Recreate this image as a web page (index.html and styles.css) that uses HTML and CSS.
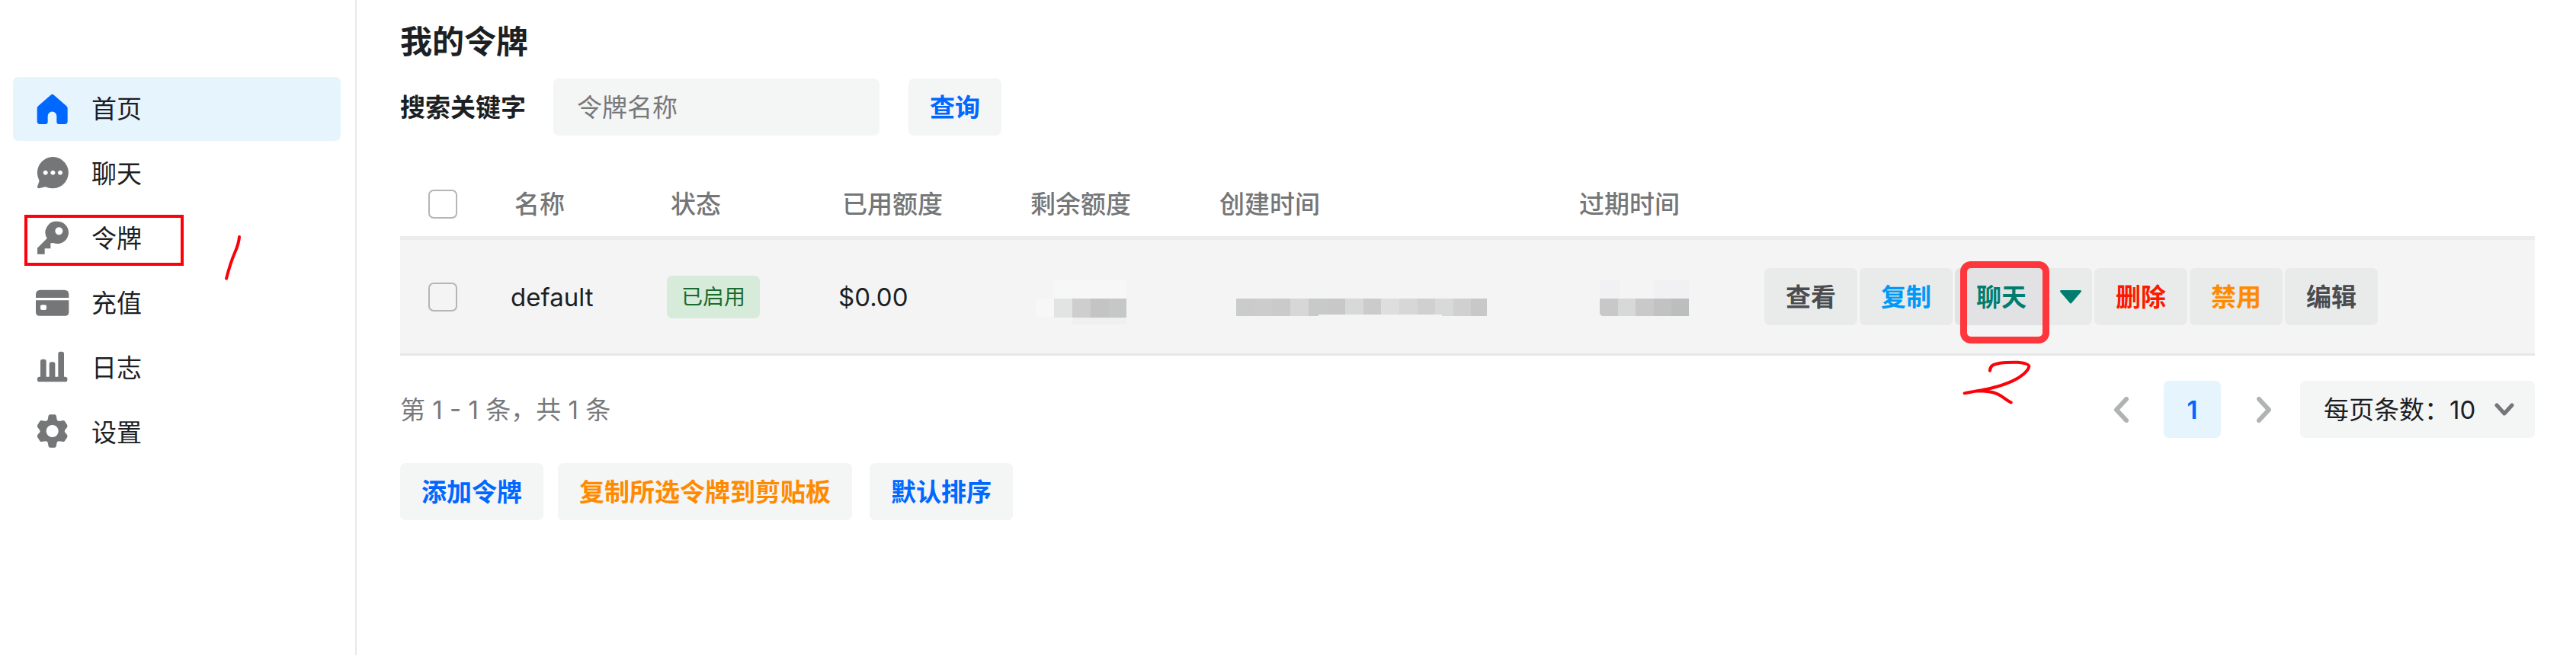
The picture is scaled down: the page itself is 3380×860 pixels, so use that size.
FILE: index.html
```html
<!DOCTYPE html>
<html lang="zh-CN">
<head>
<meta charset="utf-8">
<title>我的令牌</title>
<link rel="stylesheet" href="styles.css">
</head>
<body>
<div class="layout">
  <nav class="sidebar">
    <ul class="menu">
      <li class="menu-item"><a class="menu-link active" href="#">
        <svg class="icon" viewBox="0 0 144 144"><path d="M65 17q6-5 12 0l50 44q4 4 4 9v51q0 11-11 11H97q-9 0-9-9v-22a17 18 0 0 0-35 0v22q0 9-9 9H22q-11 0-11-11V70q0-5 4-9z"/></svg>首页</a></li>
      <li class="menu-item"><a class="menu-link" href="#">
        <svg class="icon" viewBox="0 0 144 144"><path fill-rule="evenodd" d="M73 6a62 62 0 1 1-25 119q-5-2-11 0l-18 5q-8 1-7-7l7-20q1-4-1-8A62 62 0 0 1 73 6zM44 59a9 9 0 1 0 .1 0zm29 0a9 9 0 1 0 .1 0zm29 0a9 9 0 1 0 .1 0z"/></svg>聊天</a></li>
      <li class="menu-item"><a class="menu-link" href="#">
        <svg class="icon" viewBox="0 0 144 144"><path fill-rule="evenodd" d="M91 5a44 44 0 1 1-16 85l-11 1v21H41v22H12v-24l38-38A44 44 0 0 1 91 5zm6 23a15 15 0 1 0 .1 0z"/></svg>令牌</a>
        <span class="menu-mark"></span>
        <svg class="stroke-one" viewBox="0 0 78 186"><path d="M63 12Q61 39 45 75T12 176"/></svg>
      </li>
      <li class="menu-item"><a class="menu-link" href="#">
        <svg class="icon" viewBox="0 0 144 144"><path fill-rule="evenodd" d="M24 20h94q18 0 18 18v13H6V38q0-18 18-18zM6 61h130v46q0 15-15 15H21q-15 0-15-15zm24 18q-6 0-6 6v8q0 6 6 6h12q6 0 6-6v-8q0-6-6-6z"/></svg>充值</a></li>
      <li class="menu-item"><a class="menu-link" href="#">
        <svg class="icon" viewBox="0 0 144 144"><rect x="12" y="107" width="118" height="20" rx="8"/><path d="M24 112V46q0-8 8-8h7q8 0 8 8v66zM59 112V57q0-8 8-8h7q8 0 8 8v55zM94 112V16q0-8 8-8h7q8 0 8 8v96z"/></svg>日志</a></li>
      <li class="menu-item"><a class="menu-link" href="#">
        <svg class="icon" viewBox="0 0 144 144"><path fill-rule="evenodd" d="M61 1h20q5 1 6 8 1 12 4 16 5 3 19 0 7-2 10 2l10 16q2 6-3 11-8 8-8 12t8 12q5 5 3 11l-10 16q-3 4-10 2-14-3-19 0-3 4-4 16-1 7-6 8H61q-5-1-6-8-1-12-4-16-5-3-19 0-7 2-10-2L12 89q-2-6 3-11 8-8 8-12t-8-12q-5-5-3-11l10-16q3-4 10-2 14 3 19 0 3-4 4-16 1-7 6-8zm10 41a24 24 0 1 0 .1 0z"/></svg>设置</a></li>
    </ul>
  </nav>

  <main class="main">
    <h1 class="title">我的令牌</h1>
    <form class="search">
      <label class="search-label" for="keyword">搜索关键字</label>
      <input class="search-input" id="keyword" type="text" placeholder="令牌名称">
      <button class="btn primary" type="button">查询</button>
    </form>

    <table class="tokens">
      <colgroup><col class="c-check"><col class="c-name"><col class="c-status"><col class="c-used"><col class="c-time"><col class="c-created"><col class="c-time"><col></colgroup>
      <thead>
        <tr>
          <th><input class="check" type="checkbox" aria-label="全选"></th>
          <th>名称</th><th>状态</th><th>已用额度</th><th>剩余额度</th><th>创建时间</th><th>过期时间</th><th></th>
        </tr>
      </thead>
      <tbody>
        <tr>
          <td><input class="check" type="checkbox" aria-label="选择 default"></td>
          <td>default</td>
          <td><span class="tag">已启用</span></td>
          <td>$0.00</td>
          <td><svg class="mask" width="134" height="60" viewBox="0 -3 134 60">
            <path fill="#f7f7f7" d="M36 4h95v25H36zM12 29h24v24H12z"/><path fill="#eff0f0" d="M60 53h71v10H60z"/>
            <path fill="#e1e4e3" d="M36 29h24v25H36z"/><path fill="#cecece" d="M60 29h24v25H60z"/><path fill="#c4c4c4" d="M84 29h24v25H84z"/><path fill="#c6c8c7" d="M108 29h23v25h-23z"/></svg></td>
          <td><svg class="mask" width="360" height="60" viewBox="0 -3 360 60">
            <path fill="#c9cccb" d="M27 29h23v23H27z"/><path fill="#cdcccd" d="M50 29h24v23H50z"/><path fill="#cacaca" d="M74 29h24v23H74z"/><path fill="#d7d7d7" d="M98 29h24v23H98z"/><path fill="#c8cac9" d="M122 29h24v21h-11v2h-13z"/><path fill="#c8c8c9" d="M146 29h24v21h-24z"/><path fill="#d6d9d8" d="M170 29h24v21h-24z"/><path fill="#cbcbcb" d="M194 29h23v21h-23z"/><path fill="#dedede" d="M217 29h24v21h-24z"/><path fill="#d7d7d7" d="M241 29h24v21h-24z"/><path fill="#d0d0d0" d="M265 29h23v21h-23z"/><path fill="#d7dad8" d="M288 29h24v23h-15v-2h-9z"/><path fill="#d0d0d0" d="M312 29h23v23h-23z"/><path fill="#c8c8c8" d="M335 29h21v23h-21z"/></svg></td>
          <td><svg class="mask" width="160" height="60" viewBox="0 -3 160 60">
            <path fill="#f1f1f3" d="M32 4h26v25H32zM103 4h46v25h-46z"/><path fill="#c8c8c8" d="M32 29h24v23H34v-2h-2z"/><path fill="#d6d9d8" d="M56 29h23v23H56z"/><path fill="#c9c9c9" d="M79 29h24v23H79z"/><path fill="#c2c2c2" d="M103 29h23v23h-23z"/><path fill="#bcbebd" d="M126 29h23v23h-23z"/></svg></td>
          <td>
            <div class="actions">
              <button class="btn plain" type="button">查看</button>
              <button class="btn info" type="button">复制</button>
              <div class="split">
                <button class="btn chat" type="button">聊天</button>
                <button class="btn caret" type="button" aria-label="更多"><svg width="28" height="18" viewBox="0 0 28 18"><path d="M1 0h26q2 1 0 3L15 17q-1 1-2 0L1 3q-2-2 0-3z"/></svg></button>
                <span class="chat-mark"></span>
                <svg class="stroke-two" viewBox="873 450 291 186"><path d="M990 500C991 478 1006 475 1030 470 1060 466 1086 467 1100 467 1130 470 1144 475 1144 483 1142 500 1112 526 1078 541 1050 553 1024 562 1002 567 966 577 930 580 890 589M940 580C980 580 1000 583 1020 592 1048 605 1050 615 1073 625"/></svg>
              </div>
              <button class="btn danger" type="button">删除</button>
              <button class="btn warning" type="button">禁用</button>
              <button class="btn plain" type="button">编辑</button>
            </div>
          </td>
        </tr>
      </tbody>
    </table>

    <div class="footer">
      <span class="summary">第 1 - 1 条，共 1 条</span>
      <div class="pager">
        <button class="arrow" type="button" aria-label="上一页"><svg width="20" height="34" viewBox="0 0 20 34"><path d="M17 3L4 17l13 14"/></svg></button>
        <button class="page" type="button">1</button>
        <button class="arrow" type="button" aria-label="下一页"><svg width="20" height="34" viewBox="0 0 20 34"><path d="M3 3l13 14L3 31"/></svg></button>
        <div class="size">
          <select class="size-select" aria-label="每页条数"><option>每页条数：10</option></select>
          <svg class="size-arrow" width="26" height="18" viewBox="0 0 26 18"><path d="M3 3l10 11L23 3"/></svg>
        </div>
      </div>
    </div>

    <div class="bulk">
      <button class="btn primary" type="button">添加令牌</button>
      <button class="btn warning" type="button">复制所选令牌到剪贴板</button>
      <button class="btn primary sort" type="button">默认排序</button>
    </div>
  </main>
</div>
</body>
</html>
```

FILE: styles.css
```css
* { box-sizing: border-box; }

body {
  margin: 0;
  background: #fff;
  color: #1c1f23;
  font: 400 33px/48px Inter, "Noto Sans CJK SC", sans-serif;
}

button, input, select { font: inherit; color: inherit; border: 0; margin: 0; }

.layout { display: flex; min-height: 100vh; }

/* sidebar */
.sidebar {
  flex: 0 0 468px;
  padding: 101px 19px 0 17px;
  border-right: 2px solid #e8e9ea;
}
.menu { display: flex; flex-direction: column; gap: 1px; margin: 0; padding: 0; list-style: none; }
.menu-item { position: relative; }
.menu-link {
  display: flex;
  align-items: center;
  gap: 27px;
  height: 84px;
  padding-left: 28px;
  border-radius: 7px;
  color: #1c1f23;
  text-decoration: none;
}
.menu-link.active { background: #e6f4fe; }
.icon { width: 48px; height: 48px; fill: #747678; }
.active .icon { fill: #0068ff; }
.menu-mark { position: absolute; left: 15px; top: 11px; width: 209px; height: 67px; border: 4px solid #fe0009; }
.stroke-one { position: absolute; left: 276px; top: 36px; width: 26px; height: 62px; }
.stroke-one path, .stroke-two path { fill: none; stroke: #fe0009; stroke-width: 12; stroke-linecap: round; stroke-linejoin: round; }

/* content */
.main { flex: 1; min-width: 0; padding: 24px 54px 0 57px; }
.title { margin: 0 0 17px; font-size: 42px; line-height: 62px; font-weight: 600; }
.search { display: flex; align-items: center; margin-bottom: 48px; }
.search-label { margin-right: 36px; font-weight: 600; }
.search-input { width: 428px; height: 75px; margin-right: 38px; padding: 0 31px; border-radius: 7px; background: #f4f5f5; }
.search-input::placeholder { color: #77797b; opacity: 1; }

.btn {
  height: 75px;
  padding: 0 28px;
  border-radius: 7px;
  background: #f4f5f5;
  font-weight: 600;
  white-space: nowrap;
}
.primary { color: #0068ff; }
.warning { color: #ff8a00; }
.info { color: #0099f7; }
.danger { color: #fe1800; }
.plain { color: #4a4c4f; }

/* table */
.tokens { width: 100%; table-layout: fixed; border-collapse: separate; border-spacing: 0; }
.c-check { width: 108px; }
.c-name { width: 205px; }
.c-status { width: 225px; }
.c-used { width: 247px; }
.c-time { width: 248px; }
.c-created { width: 472px; }
.tokens th { height: 89px; padding: 0 0 0 42px; border-bottom: 5px solid #ebeced; color: #747678; font-weight: 500; text-align: left; }
.tokens td { height: 152px; padding: 0 0 0 37px; border-bottom: 3px solid #e6e7e8; background: #f4f4f4; }
.tokens th:first-child { padding-left: 37px; }
.check { display: block; width: 38px; height: 38px; appearance: none; border: 2px solid #b3b5b6; border-radius: 7px; }
.tag { display: inline-block; padding: 0 19px; border-radius: 7px; background: #d7ebda; color: #1b6b2f; font-size: 28px; line-height: 56px; vertical-align: middle; }
.mask { display: block; overflow: visible; }

.actions { display: flex; gap: 3px; }
.actions .btn { background: #e9ebeb; }
.split { position: relative; display: flex; }
.actions .chat { background: #e2e2e4; color: #007d6f; border-radius: 7px 0 0 7px; }
.actions .caret { display: flex; align-items: center; padding: 0 14px 0 16px; border-radius: 0 7px 7px 0; fill: #007d6f; }
.chat-mark { position: absolute; left: 7px; top: -9px; width: 117px; height: 108px; border: 9px solid #ff363c; border-radius: 14px; }
.stroke-two { position: absolute; left: 7px; top: 118px; width: 97px; height: 62px; }

/* pagination */
.footer { display: flex; justify-content: space-between; align-items: center; margin-top: 33px; }
.summary { color: #77797b; }
.pager { display: flex; align-items: center; }
.arrow { display: flex; justify-content: center; align-items: center; width: 75px; height: 75px; background: none; }
.arrow path { fill: none; stroke: #b0b2b3; stroke-width: 6; stroke-linecap: round; stroke-linejoin: round; }
.page { width: 75px; height: 75px; margin: 0 19px; border-radius: 7px; background: #e6f4fe; color: #0068ff; font-weight: 600; }
.size { position: relative; margin-left: 10px; }
.size-select { display: block; width: 308px; height: 75px; padding: 0 0 0 31px; appearance: none; border-radius: 7px; background: #f4f5f5; }
.size-arrow { position: absolute; right: 27px; top: 29px; pointer-events: none; }
.size-arrow path { fill: none; stroke: #747678; stroke-width: 5; stroke-linecap: round; stroke-linejoin: round; }

.bulk { display: flex; gap: 19px; margin-top: 33px; }
.sort { margin-left: 4px; }
```
